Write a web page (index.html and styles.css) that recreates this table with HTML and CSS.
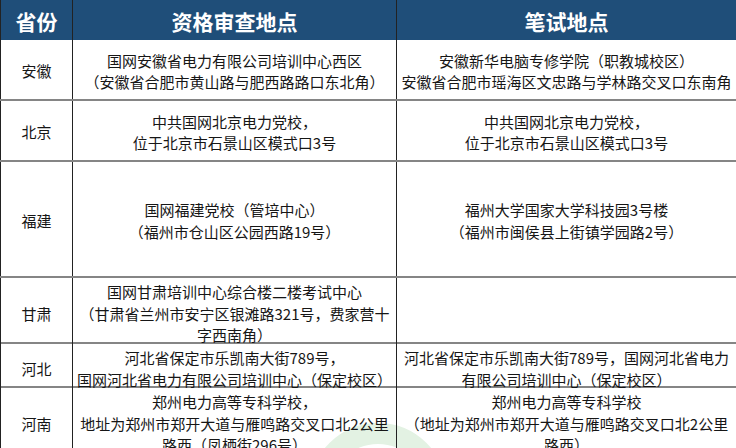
FILE: index.html
```html
<!DOCTYPE html>
<html lang="zh-CN">
<head>
<meta charset="utf-8">
<title>考点表</title>
<link rel="stylesheet" href="styles.css">
</head>
<body>
<div class="sheet">
  <div class="row head">
    <div class="cell">省份</div>
    <div class="cell">资格审查地点</div>
    <div class="cell">笔试地点</div>
  </div>
  <div class="row h-ah">
    <div class="cell">安徽</div>
    <div class="cell">国网安徽省电力有限公司培训中心西区<br>（安徽省合肥市黄山路与肥西路路口东北角）</div>
    <div class="cell">安徽新华电脑专修学院（职教城校区）<br>安徽省合肥市瑶海区文忠路与学林路交叉口东南角</div>
  </div>
  <div class="row h-bj">
    <div class="cell">北京</div>
    <div class="cell">中共国网北京电力党校，<br>位于北京市石景山区模式口3号</div>
    <div class="cell">中共国网北京电力党校，<br>位于北京市石景山区模式口3号</div>
  </div>
  <div class="row h-fj">
    <div class="cell">福建</div>
    <div class="cell">国网福建党校（管培中心）<br>（福州市仓山区公园西路19号）</div>
    <div class="cell">福州大学国家大学科技园3号楼<br>（福州市闽侯县上街镇学园路2号）</div>
  </div>
  <div class="row h-gs">
    <div class="cell">甘肃</div>
    <div class="cell">国网甘肃培训中心综合楼二楼考试中心<br>（甘肃省兰州市安宁区银滩路321号，费家营十<br>字西南角）</div>
    <div class="cell"></div>
  </div>
  <div class="row h-hb">
    <div class="cell">河北</div>
    <div class="cell">河北省保定市乐凯南大街789号，<br>国网河北省电力有限公司培训中心（保定校区）</div>
    <div class="cell">河北省保定市乐凯南大街789号，国网河北省电力<br>有限公司培训中心（保定校区）</div>
  </div>
  <div class="row h-hn">
    <div class="cell">河南</div>
    <div class="cell">郑州电力高等专科学校，<br>地址为郑州市郑开大道与雁鸣路交叉口北2公里<br>路西（凤栖街296号）</div>
    <div class="cell">郑州电力高等专科学校<br>（地址为郑州市郑开大道与雁鸣路交叉口北2公里<br>路西）</div>
  </div>
</div>
<div class="mark"></div>
</body>
</html>
```

FILE: styles.css
```css
html {
  background: #ffffff;
}
body {
  margin: 0;
  width: 736px;
  height: 448px;
  overflow: hidden;
  font-family: "Noto Sans CJK SC", "Noto Sans", sans-serif;
  font-size: 15px;
  color: #161616;
}
.sheet {
  width: 736px;
}
.row {
  display: grid;
  grid-template-columns: 72px 324px 340px;
  box-sizing: border-box;
  border-bottom: 2px solid #858585;
}
.cell {
  border-left: 1px solid #222222;
  display: flex;
  align-items: center;
  justify-content: center;
  text-align: center;
  white-space: nowrap;
  line-height: 21.5px;
  padding-top: 3px;
  box-sizing: border-box;
}
.head {
  height: 40px;
  background: #1f4e79;
  border-bottom: none;
}
.head .cell {
  color: #ffffff;
  font-weight: bold;
  font-size: 21px;
  padding-top: 4px;
}
.h-ah { height: 61px; }
.h-bj { height: 61px; }
.h-fj { height: 116px; }
.h-gs { height: 66px; }
.h-hb { height: 44px; }
.h-hn { height: 68px; }
.mark {
  position: absolute;
  left: 309px;
  top: 423px;
  width: 138px;
  height: 138px;
  box-sizing: border-box;
  border: 21px solid #e3f2e3;
  border-radius: 50%;
  z-index: -1;
}
```
